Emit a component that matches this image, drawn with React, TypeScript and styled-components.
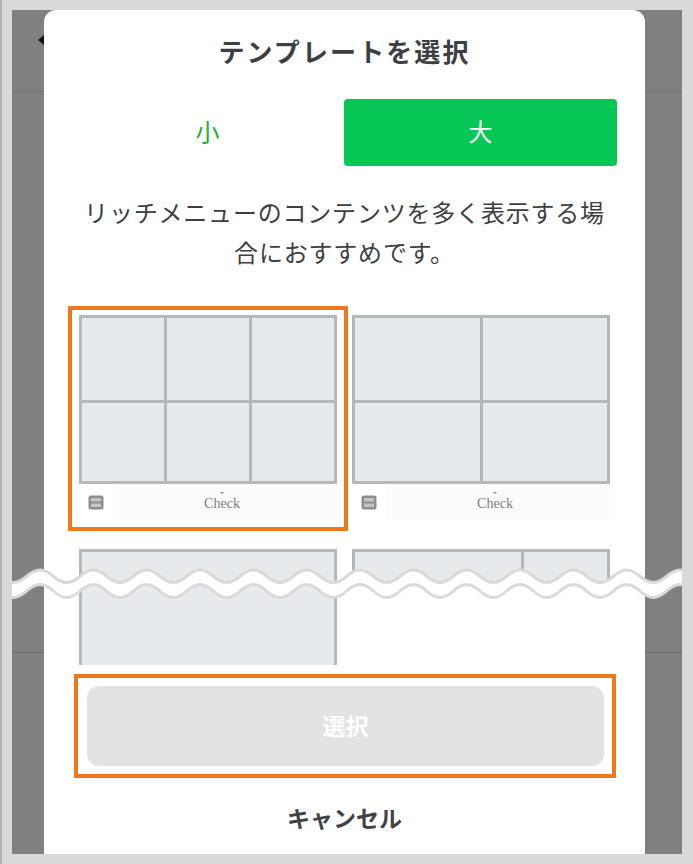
import React from "react";
import styled, { createGlobalStyle } from "styled-components";

const Global = createGlobalStyle`
  html, body { margin: 0; padding: 0; background: #d9d9d9; }
  body { font-family: "Noto Sans CJK JP", "Noto Sans", sans-serif; }
`;

const Page = styled.div`
  width: 693px;
  height: 864px;
  box-sizing: border-box;
  padding: 10px 11px 10px 10px;
  border-left: 2px solid #b4b4b4;
  background: #d9d9d9;
  overflow: hidden;
`;

const Backdrop = styled.div`
  position: relative;
  display: flex;
  height: 844px;
  padding: 0 37px 0 32px;
  overflow: hidden;
  background:
    linear-gradient(#737373, #737373) 0 81px / 100% 1px no-repeat,
    linear-gradient(#6c6c6c, #6c6c6c) 0 642px / 100% 1px no-repeat,
    #808080;
`;

const BackArrow = styled.span`
  position: absolute;
  left: 26px;
  top: 25px;
  width: 0;
  height: 0;
  border-style: solid;
  border-width: 5px 6px 5px 0;
  border-color: transparent #111 transparent transparent;
`;

const Modal = styled.div`
  position: relative;
  width: 601px;
  height: 844px;
  background: #fff;
  border-radius: 12px 12px 0 0;
  overflow: hidden;
  color: #3c4043;
`;

const Title = styled.h1`
  margin: 0 0 7px;
  font-size: 26px;
  letter-spacing: 2.1px;
  line-height: 82px;
  font-weight: 700;
  text-align: center;
`;

const Tabs = styled.div`
  display: grid;
  grid-template-columns: 1fr 1fr;
  height: 67px;
  margin: 0 28px 0 27px;
`;

const Tab = styled.div<{ $active?: boolean }>`
  display: flex;
  align-items: center;
  justify-content: center;
  padding-bottom: 4px;
  box-sizing: border-box;
  border-radius: 4px;
  font-size: 24px;
  background: ${(p) => (p.$active ? "#06c755" : "#fff")};
  color: ${(p) => (p.$active ? "#fff" : "#1fae2e")};
`;

const Description = styled.p`
  margin: 26px 32px 0;
  font-size: 24px;
  letter-spacing: 0.8px;
  line-height: 40px;
  text-align: center;
  color: #3c4043;
`;

const TemplateScroller = styled.div`
  display: grid;
  grid-template-columns: 258px 258px;
  column-gap: 15px;
  row-gap: 29px;
  align-items: start;
  align-content: start;
  height: 350px;
  margin-top: 34px;
  padding: 9px 0 0 35px;
  overflow: hidden;
`;

const Card = styled.div<{ $selected?: boolean }>`
  position: relative;
  ${(p) =>
    p.$selected
      ? `&::after {
    content: "";
    position: absolute;
    inset: -9px -11px -11px -11px;
    border: 4px solid #f0781a;
  }`
      : ""}
`;

const Cells = styled.div<{ $cols: string; $rows: string; $height: number; $cut?: boolean }>`
  display: grid;
  grid-template-columns: ${(p) => p.$cols};
  grid-template-rows: ${(p) => p.$rows};
  gap: 3px;
  box-sizing: border-box;
  height: ${(p) => p.$height}px;
  padding: 3px 3px ${(p) => (p.$cut ? 0 : 3)}px;
  background: #b5b8bb;
`;

const Cell = styled.div`
  background: #e7eaed;
`;

const MenuBar = styled.div`
  display: flex;
  height: 36px;
  background: #fff;
`;

const KeyboardSlot = styled.div`
  display: flex;
  align-items: center;
  justify-content: center;
  width: 34px;
  box-sizing: border-box;
  filter: blur(0.5px);
`;

const MenuLabel = styled.div`
  position: relative;
  flex: 1;
  display: flex;
  align-items: center;
  justify-content: center;
  padding: 3px 6px 0 0;
  box-sizing: border-box;
  background: #fcfcfc;
  font-family: "Liberation Serif", serif;
  font-size: 14px;
  color: #7c7c7c;
  &::before {
    content: "";
    position: absolute;
    top: 8px;
    left: 107px;
    border-style: solid;
    border-width: 2px 2px 0 2px;
    border-color: #8a8a8a transparent transparent transparent;
  }
`;

const SelectFrame = styled.div`
  box-sizing: border-box;
  width: 542px;
  height: 104px;
  margin: 9px 0 0 30px;
  padding: 8px 8px 8px 9px;
  border: 4px solid #f0781a;
`;

const SelectButton = styled.div`
  display: flex;
  align-items: center;
  justify-content: center;
  height: 80px;
  padding-bottom: 2px;
  box-sizing: border-box;
  border-radius: 12px;
  background: #e2e2e2;
  color: #fff;
  font-size: 23px;
  font-weight: 700;
`;

const Cancel = styled.div`
  margin-top: 1px;
  line-height: 76px;
  text-align: center;
  font-size: 23px;
  font-weight: 700;
  color: #3f4347;
`;

const Tear = styled.svg`
  position: absolute;
  left: 0;
  top: 550px;
  width: 670px;
  height: 50px;
`;

const HALF = 80 / 3;
const STEPS = 34;

const edge = (crest: number, trough: number) => {
  let x = 28 - HALF * 4;
  let y = crest;
  let d = `M${x} ${y}`;
  for (let i = 0; i < STEPS; i++) {
    const next = y === crest ? trough : crest;
    d += ` C${(x + HALF * 0.45).toFixed(2)} ${y} ${(x + HALF * 0.55).toFixed(2)} ${next} ${(x + HALF).toFixed(2)} ${next}`;
    x += HALF;
    y = next;
  }
  return { d, end: x };
};

const edgeBack = (crest: number, trough: number, from: number) => {
  let x = from;
  let y = crest;
  let d = `L${x} ${y}`;
  for (let i = 0; i < STEPS; i++) {
    const next = y === crest ? trough : crest;
    d += ` C${(x - HALF * 0.45).toFixed(2)} ${y} ${(x - HALF * 0.55).toFixed(2)} ${next} ${(x - HALF).toFixed(2)} ${next}`;
    x -= HALF;
    y = next;
  }
  return d;
};

const TearLine = () => {
  const top = edge(10, 22.5);
  const bottom = edge(24.5, 37.5);
  return (
    <Tear viewBox="0 0 670 50">
      <path d={`${top.d} ${edgeBack(24.5, 37.5, top.end)} Z`} fill="#fff" />
      <path d={top.d} fill="none" stroke="#d9d9d9" strokeWidth="3" />
      <path d={bottom.d} fill="none" stroke="#d9d9d9" strokeWidth="3" />
    </Tear>
  );
};

const Bar = () => (
  <MenuBar>
    <KeyboardSlot>
      <svg width="16" height="15" viewBox="0 0 16 15">
        <rect x="0.5" y="0.5" width="15" height="14" rx="2.5" fill="#8e8e8e" />
        <rect x="3" y="3" width="10" height="3.5" fill="#c4c4c4" />
        <rect x="3" y="8.5" width="10" height="3.5" fill="#c4c4c4" />
      </svg>
    </KeyboardSlot>
    <MenuLabel>Check</MenuLabel>
  </MenuBar>
);

const fill = (n: number) => Array.from({ length: n }, (_, i) => <Cell key={i} />);

export default function App() {
  return (
    <>
      <Global />
      <Page>
        <Backdrop>
          <BackArrow />
          <Modal>
            <Title>テンプレートを選択</Title>
            <Tabs>
              <Tab>小</Tab>
              <Tab $active>大</Tab>
            </Tabs>
            <Description>リッチメニューのコンテンツを多く表示する場合におすすめです。</Description>
            <TemplateScroller>
              <Card $selected>
                <Cells $cols="1fr 1fr 1fr" $rows="82fr 78fr" $height={169}>{fill(6)}</Cells>
                <Bar />
              </Card>
              <Card>
                <Cells $cols="1fr 1fr" $rows="82fr 78fr" $height={169}>{fill(4)}</Cells>
                <Bar />
              </Card>
              <Card>
                <Cells $cols="1fr" $rows="1fr" $height={169}>{fill(1)}</Cells>
              </Card>
              <Card>
                <Cells $cols="2fr 1fr" $rows="1fr" $height={34} $cut>{fill(2)}</Cells>
              </Card>
            </TemplateScroller>
            <SelectFrame>
              <SelectButton>選択</SelectButton>
            </SelectFrame>
            <Cancel>キャンセル</Cancel>
          </Modal>
          <TearLine />
        </Backdrop>
      </Page>
    </>
  );
}
